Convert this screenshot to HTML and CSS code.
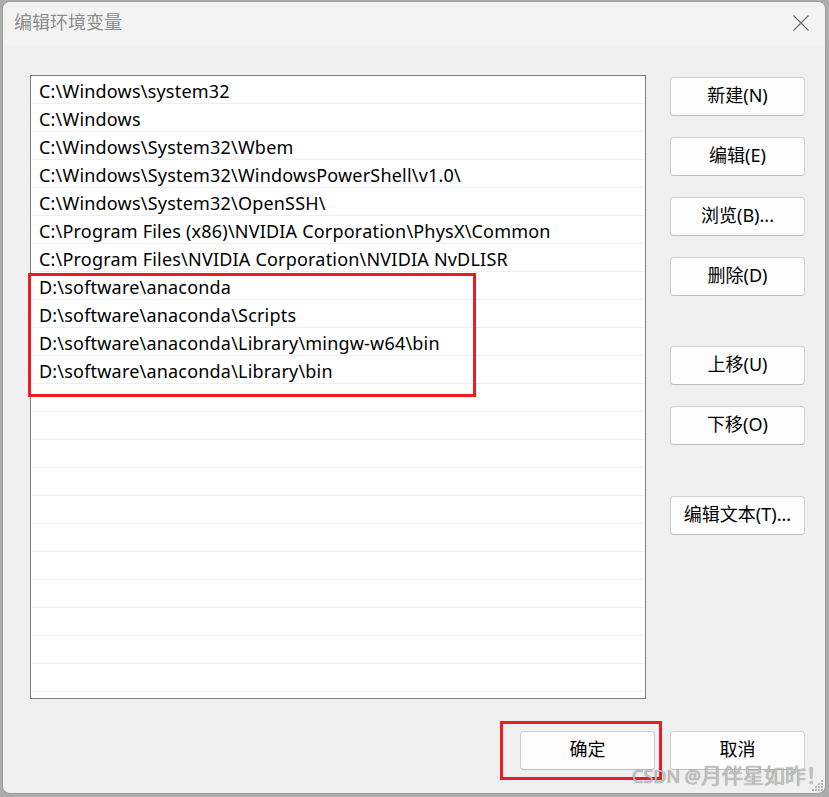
FILE: index.html
```html
<!DOCTYPE html>
<html lang="zh-CN">
<head>
<meta charset="utf-8">
<title>编辑环境变量</title>
<link rel="stylesheet" href="styles.css">
</head>
<body>
<div class="dialog">
  <div class="titlebar">
    <span class="title">编辑环境变量</span>
    <svg class="close" width="16" height="16" viewBox="0 0 16 16" aria-hidden="true">
      <path d="M0.5 0.5 L15.5 15.5 M15.5 0.5 L0.5 15.5" stroke="#707070" stroke-width="1.2" fill="none"/>
    </svg>
  </div>
  <div class="content">
    <div class="main">
      <div class="list-wrap">
        <ul class="list">
          <li>C:\Windows\system32</li>
          <li>C:\Windows</li>
          <li>C:\Windows\System32\Wbem</li>
          <li>C:\Windows\System32\WindowsPowerShell\v1.0\</li>
          <li>C:\Windows\System32\OpenSSH\</li>
          <li>C:\Program Files (x86)\NVIDIA Corporation\PhysX\Common</li>
          <li>C:\Program Files\NVIDIA Corporation\NVIDIA NvDLISR</li>
          <li>D:\software\anaconda</li>
          <li>D:\software\anaconda\Scripts</li>
          <li>D:\software\anaconda\Library\mingw-w64\bin</li>
          <li>D:\software\anaconda\Library\bin</li>
          <li></li><li></li><li></li><li></li><li></li><li></li>
          <li></li><li></li><li></li><li></li><li></li><li></li>
        </ul>
        <div class="mark mark-list"></div>
      </div>
      <div class="side">
        <button class="btn">新建(N)</button>
        <button class="btn">编辑(E)</button>
        <button class="btn">浏览(B)...</button>
        <button class="btn">删除(D)</button>
        <button class="btn btn-gap">上移(U)</button>
        <button class="btn">下移(O)</button>
        <button class="btn btn-gap2">编辑文本(T)...</button>
      </div>
    </div>
    <div class="footer">
      <div class="ok-wrap">
        <button class="btn">确定</button>
        <div class="mark mark-ok"></div>
      </div>
      <button class="btn">取消</button>
    </div>
  </div>
  <svg class="grip" width="12" height="12" viewBox="0 0 12 12" aria-hidden="true">
    <g fill="#b8b8b8">
      <rect x="9" y="0" width="2" height="2"/>
      <rect x="6" y="3" width="2" height="2"/><rect x="9" y="3" width="2" height="2"/>
      <rect x="3" y="6" width="2" height="2"/><rect x="6" y="6" width="2" height="2"/><rect x="9" y="6" width="2" height="2"/>
      <rect x="0" y="9" width="2" height="2"/><rect x="3" y="9" width="2" height="2"/><rect x="6" y="9" width="2" height="2"/><rect x="9" y="9" width="2" height="2"/>
    </g>
  </svg>
  <div class="watermark"><span class="wm-latin">CSDN @</span><span class="wm-cjk">月伴星如昨！</span></div>
</div>
</body>
</html>
```

FILE: styles.css
```css
* {
  box-sizing: border-box;
}

html, body {
  margin: 0;
  padding: 0;
}

body {
  width: 829px;
  height: 797px;
  overflow: hidden;
  background: #acacac;
  padding: 1px 3px 3px 2px;
  font-family: "Noto Sans", "Noto Sans CJK SC", sans-serif;
}

.dialog {
  position: relative;
  width: 824px;
  height: 793px;
  background: #f0f0f0;
  border: 1px solid #9c9c9c;
  border-radius: 8px;
  overflow: hidden;
  display: flex;
  flex-direction: column;
}

.titlebar {
  height: 43px;
  flex: none;
  background: #f3f3f3;
  display: flex;
  align-items: center;
  justify-content: space-between;
  padding: 0 16px 0 11px;
}

.title {
  font-family: "Noto Sans CJK SC", sans-serif;
  font-size: 18px;
  line-height: 24px;
  color: #8c8c8c;
  margin-top: -5px;
}

.close {
  display: block;
  margin-top: -2px;
}

.content {
  flex: 1;
  padding: 30px 20px 0 27px;
  display: flex;
  flex-direction: column;
}

.main {
  display: flex;
  gap: 24px;
}

.list-wrap {
  position: relative;
  width: 616px;
  height: 624px;
  flex: none;
}

.list {
  list-style: none;
  margin: 0;
  padding: 0;
  height: 100%;
  overflow: hidden;
  background: #ffffff;
  border: 1px solid #7c7c84;
}

.list li {
  height: 28px;
  margin: 0 1px;
  border-bottom: 1px solid #eeeeee;
  padding: 1px 0 0 7px;
  font-size: 18px;
  letter-spacing: 0.2px;
  line-height: 28px;
  color: #000000;
  white-space: nowrap;
}

.mark {
  position: absolute;
  border: 3px solid #ed1c24;
  pointer-events: none;
}

.mark-list {
  left: -2px;
  top: 198px;
  width: 448px;
  height: 124px;
}

.side {
  display: flex;
  flex-direction: column;
  gap: 21px;
  padding-top: 2px;
}

.btn {
  width: 135px;
  height: 39px;
  background: #fdfdfd;
  border: 1px solid #d0d0d0;
  border-bottom-color: #bdbdbd;
  border-radius: 4px;
  font-family: "Noto Sans", "Noto Sans CJK SC", sans-serif;
  font-size: 18px;
  line-height: 24px;
  color: #000000;
  padding: 0 0 4px;
}

.side .btn-gap {
  margin-top: 29px;
}

.side .btn-gap2 {
  margin-top: 30px;
}

.footer {
  display: flex;
  justify-content: flex-end;
  gap: 15px;
  margin-top: 32px;
}

.ok-wrap {
  position: relative;
}

.mark-ok {
  left: -20px;
  top: -10px;
  width: 162px;
  height: 59px;
}

.grip {
  position: absolute;
  right: 1px;
  bottom: 1px;
}

.watermark {
  position: absolute;
  right: -2px;
  bottom: 3px;
  line-height: 26px;
  color: rgba(210, 210, 210, 0.85);
  text-shadow: 0 0 1px rgba(90, 90, 90, 0.9);
  white-space: nowrap;
}

.wm-latin {
  font-family: "Noto Sans", sans-serif;
  font-size: 18px;
}

.wm-cjk {
  font-family: "Noto Sans CJK SC", sans-serif;
  font-size: 21px;
}
```
